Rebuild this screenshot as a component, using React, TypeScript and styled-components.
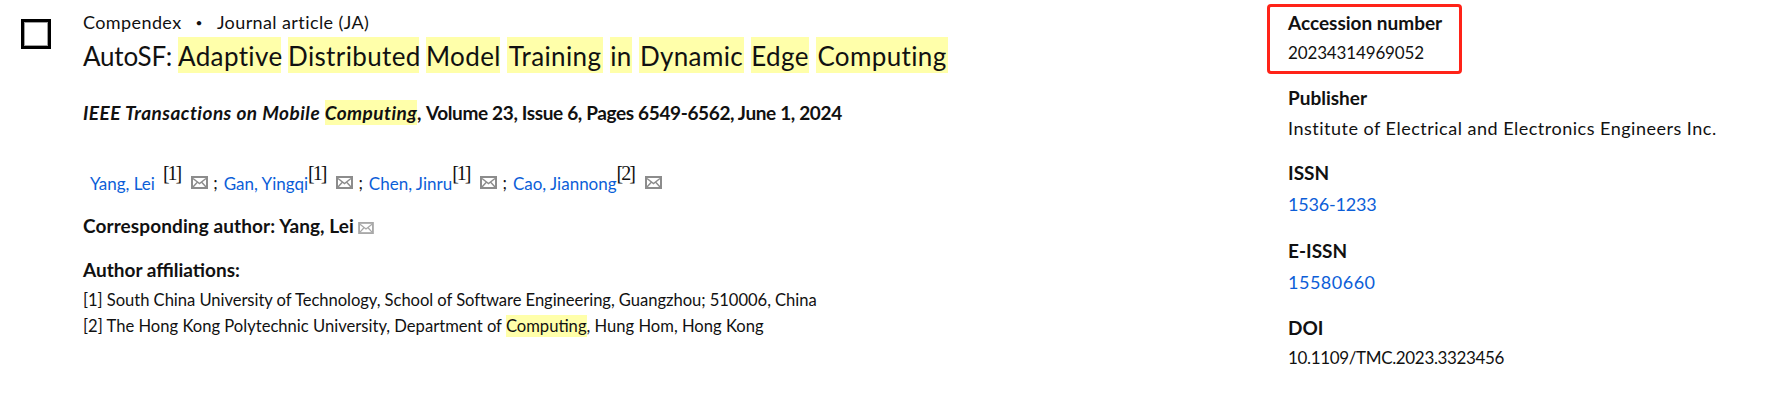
import styled, { createGlobalStyle } from "styled-components";

const GlobalStyle = createGlobalStyle`
  html, body {
    margin: 0;
    padding: 0;
    background: #fff;
  }
  body {
    font-family: "Lato", "Noto Sans", sans-serif;
    color: #000;
  }
`;

const MailIcon = ({ small }: { small?: boolean }) => (
  <SMail $small={small} viewBox="0 0 17 13" aria-hidden="true">
    <rect x="0" y="0" width="17" height="13" fill="#8c8c8c" />
    <rect x="2" y="2" width="13" height="9" fill="#fff" />
    <path d="M2 2.5 8.5 7.5 15 2.5M2 11 6.5 6M15 11 10.5 6" fill="none" stroke="#8c8c8c" strokeWidth="1.4" />
  </SMail>
);

const authors = [
  { name: "Yang, Lei", ref: 1, gap: true },
  { name: "Gan, Yingqi", ref: 1 },
  { name: "Chen, Jinru", ref: 1 },
  { name: "Cao, Jiannong", ref: 2 },
];

const titleWords = [
  { word: "Adaptive", width: 103 },
  { word: "Distributed", width: 131 },
  { word: "Model", width: 74 },
  { word: "Training", width: 96 },
  { word: "in", width: 22 },
  { word: "Dynamic", width: 105 },
  { word: "Edge", width: 58 },
  { word: "Computing", width: 132 },
];

const App = () => {
  return (
    <>
      <GlobalStyle />
      <SPage>
        <SCheckCol>
          <SCheckbox />
        </SCheckCol>
        <SMain>
          <SMeta>
            <span>Compendex</span>
            <SDot>•</SDot>
            <span>Journal article (JA)</span>
          </SMeta>
          <STitle>
            <STitleLead>AutoSF:</STitleLead>
            {titleWords.map(({ word, width }) => (
              <SMark key={word} $width={width}>
                {word}
              </SMark>
            ))}
          </STitle>
          <SJournal>
            <SJournalName>
              IEEE Transactions on Mobile <SInlineMark>Computing</SInlineMark>,
            </SJournalName>{" "}
            Volume 23, Issue 6, Pages 6549-6562, June 1, 2024
          </SJournal>
          <SAuthors>
            {authors.map((author, i) => (
              <SAuthor key={author.name}>
                {i > 0 && <SSemi>;</SSemi>}
                <SLink>{author.name}</SLink>
                <SRef $gap={author.gap}>[{author.ref}]</SRef>
                <MailIcon />
              </SAuthor>
            ))}
          </SAuthors>
          <SCorresponding>
            Corresponding author: Yang, Lei
            <MailIcon small />
          </SCorresponding>
          <SAffilHeading>Author affiliations:</SAffilHeading>
          <SAffilList>
            <SAffil $spacing={-0.05}>
              [1] South China University of Technology, School of Software Engineering, Guangzhou; 510006, China
            </SAffil>
            <SAffil>
              [2] The Hong Kong Polytechnic University, Department of <SInlineMark>Computing</SInlineMark>, Hung Hom, Hong Kong
            </SAffil>
          </SAffilList>
        </SMain>
        <SSide>
          <SFieldBoxed>
            <SLabel>Accession number</SLabel>
            <SValue $spacing={-0.15}>20234314969052</SValue>
          </SFieldBoxed>
          <SField>
            <SLabel>Publisher</SLabel>
            <SValue $size={18} $spacing={0.5}>
              Institute of Electrical and Electronics Engineers Inc.
            </SValue>
          </SField>
          <SField>
            <SLabel>ISSN</SLabel>
            <SValueLink $spacing={-0.2}>1536-1233</SValueLink>
          </SField>
          <SField>
            <SLabel>E-ISSN</SLabel>
            <SValueLink $spacing={0.5}>15580660</SValueLink>
          </SField>
          <SField>
            <SLabel>DOI</SLabel>
            <SValue $spacing={-0.35}>10.1109/TMC.2023.3323456</SValue>
          </SField>
        </SSide>
      </SPage>
    </>
  );
};

const SPage = styled.div`
  display: flex;
  width: 1787px;
  height: 402px;
  overflow: hidden;
  background: #fff;
`;

const SCheckCol = styled.div`
  width: 83px;
  flex: none;
  padding: 19px 0 0 21px;
  box-sizing: border-box;
`;

const SCheckbox = styled.div`
  width: 30px;
  height: 30px;
  box-sizing: border-box;
  border: 3px solid #000;
  box-shadow: inset 0 0 0 1px #a0a0a0;
`;

const SMain = styled.div`
  width: 1184px;
  flex: none;
  padding-top: 11px;
`;

const SMeta = styled.div`
  display: flex;
  align-items: center;
  height: 22px;
  font-size: 18px;
  letter-spacing: 0.4px;
  color: #111;
`;

const SDot = styled.span`
  margin: 0 14px;
  font-size: 12px;
`;

const STitle = styled.h2`
  display: flex;
  gap: 7px;
  margin: 4px 0 0;
  height: 36px;
  line-height: 39px;
  font-size: 26px;
  font-weight: 400;
  letter-spacing: 0.37px;
  color: #111;
  white-space: nowrap;
`;

const STitleLead = styled.span`
  width: 88px;
  letter-spacing: -0.2px;
`;

const SMark = styled.span<{ $width: number }>`
  width: ${({ $width }) => $width}px;
  height: 36px;
  background: #ffffaa;
  text-align: center;
`;

const SInlineMark = styled.span`
  background: #ffffaa;
  padding: 1px 0;
`;

const SJournal = styled.div`
  margin-top: 27px;
  height: 26px;
  line-height: 26px;
  font-size: 19px;
  font-weight: 700;
  letter-spacing: -0.36px;
  color: #111;
  white-space: nowrap;
`;

const SJournalName = styled.em`
  letter-spacing: 0.47px;
`;

const SAuthors = styled.div`
  display: flex;
  align-items: center;
  margin: 43px 0 0 7px;
  height: 26px;
  font-size: 17px;
  white-space: nowrap;
`;

const SAuthor = styled.span`
  display: inline-flex;
  align-items: center;
`;

const SSemi = styled.span`
  margin: 0 6px 0 5px;
  color: #111;
`;

const SLink = styled.a`
  color: #0c5ed8;
  cursor: pointer;
  position: relative;
  top: 1px;
`;

const SRef = styled.span<{ $gap?: boolean }>`
  position: relative;
  top: -9px;
  margin: 0 11px 0 ${({ $gap }) => ($gap ? "8px" : "0")};
  font-family: "Liberation Serif", serif;
  font-size: 20px;
  letter-spacing: -2px;
  color: #111;
`;

const SMail = styled.svg<{ $small?: boolean }>`
  flex: none;
  width: ${({ $small }) => ($small ? "16px" : "17px")};
  height: ${({ $small }) => ($small ? "12px" : "13px")};
  margin-left: ${({ $small }) => ($small ? "4px" : "0")};
  opacity: ${({ $small }) => ($small ? 0.75 : 1)};
  vertical-align: -1px;
`;

const SCorresponding = styled.div`
  margin-top: 18px;
  height: 26px;
  line-height: 26px;
  font-size: 19px;
  font-weight: 700;
  letter-spacing: 0.1px;
  color: #111;
`;

const SAffilHeading = styled.div`
  margin-top: 18px;
  height: 26px;
  line-height: 26px;
  font-size: 19px;
  font-weight: 700;
  color: #111;
`;

const SAffilList = styled.div`
  margin-top: 4px;
`;

const SAffil = styled.div<{ $spacing?: number }>`
  height: 26px;
  line-height: 26px;
  font-size: 16.6px;
  letter-spacing: ${({ $spacing }) => $spacing ?? 0}px;
  color: #111;
`;

const SSide = styled.div`
  display: flex;
  flex-direction: column;
  padding-top: 4px;
`;

const SField = styled.div`
  display: flex;
  flex-direction: column;
  gap: 6px;
  margin-top: 21px;
  padding: 0 21px;
`;

const SFieldBoxed = styled(SField)`
  width: 195px;
  height: 70px;
  box-sizing: border-box;
  margin: 0 0 -9px;
  padding: 4px 18px 0;
  border: 3px solid #ff2318;
  border-radius: 4px;
`;

const SLabel = styled.div`
  height: 24px;
  line-height: 24px;
  font-size: 19px;
  font-weight: 700;
  color: #111;
  white-space: nowrap;
`;

const SValue = styled.div<{ $size?: number; $spacing?: number }>`
  height: 24px;
  line-height: 24px;
  font-size: ${({ $size }) => $size ?? 17}px;
  letter-spacing: ${({ $spacing }) => $spacing ?? 0}px;
  color: #111;
  white-space: nowrap;
`;

const SValueLink = styled.a<{ $spacing?: number }>`
  height: 26.5px;
  line-height: 26.5px;
  font-size: 18px;
  letter-spacing: ${({ $spacing }) => $spacing ?? 0}px;
  color: #0c5ed8;
  cursor: pointer;
`;

export default App;
